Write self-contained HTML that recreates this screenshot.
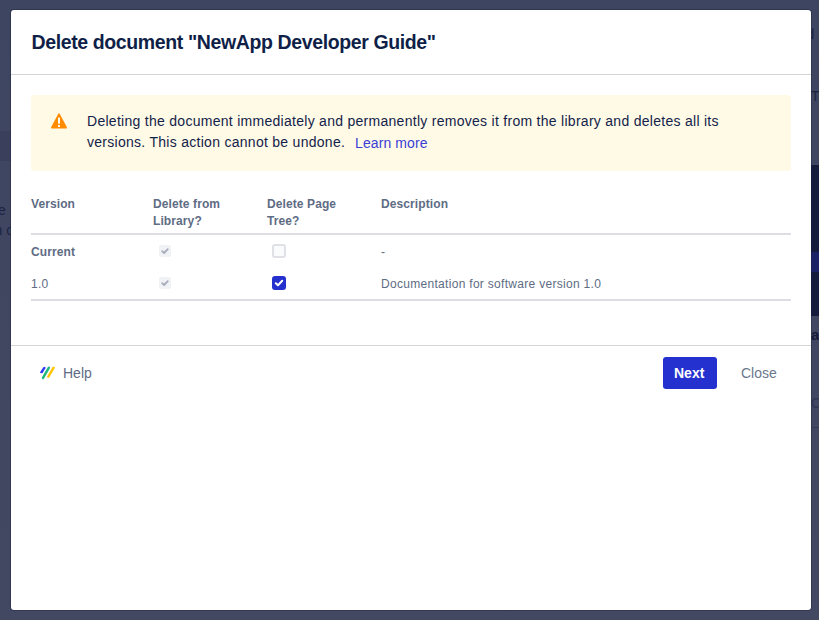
<!DOCTYPE html>
<html><head><meta charset="utf-8">
<style>
html,body{margin:0;padding:0;}
body{width:819px;height:620px;overflow:hidden;position:relative;background:linear-gradient(#3e4560,#434862);font-family:"Liberation Sans",sans-serif;}
.bg{position:absolute;}
.modal{position:absolute;left:11px;top:10px;width:800px;height:600px;background:#fff;border-radius:3px;box-shadow:0 0 0 1px rgba(20,28,60,0.35);}
.p{position:absolute;white-space:nowrap;}
.title{left:20.5px;top:22px;font-size:19.5px;line-height:20px;font-weight:bold;color:#0f1f47;letter-spacing:-0.38px;}
.hline{position:absolute;left:0;width:800px;height:1px;background:#d4d4d6;}
.warn{position:absolute;left:20px;top:85px;width:760px;height:76px;background:#fffae6;border-radius:3px;}
.wt{font-size:14px;line-height:20px;color:#13224a;letter-spacing:0.28px;}
.link{color:#3a40d6;}
.th{font-size:12px;font-weight:bold;color:#5e6c84;line-height:17px;letter-spacing:0.1px;}
.td{font-size:12px;color:#5e6c84;line-height:17px;letter-spacing:0.3px;}
.cb{position:absolute;box-sizing:border-box;}
.f14{font-size:14px;line-height:20px;}
</style></head><body>
<div class="bg" style="left:0;top:131px;width:11px;height:30px;background:#3a405c"></div>
<div class="bg" style="left:811px;top:165px;width:8px;height:151px;background:#151b3b"></div>
<div class="bg" style="left:811px;top:252px;width:8px;height:20px;background:#1b2366"></div>
<div class="bg" style="left:811px;top:427px;width:8px;height:1px;background:#363c56"></div>
<div class="bg" style="left:-2px;top:200px;width:13px;height:40px;overflow:hidden;font-size:14px;line-height:20px;color:#1c2342;white-space:nowrap">e<br><span style="margin-left:-3.5px">n c</span></div>
<div class="bg" style="left:811px;top:24px;width:8px;height:30px;overflow:hidden;font-size:14px;line-height:20px;color:#1c2342;white-space:nowrap"><span style="margin-left:-4.5px">d</span></div>
<div class="bg" style="left:811px;top:86px;width:8px;height:30px;overflow:hidden;font-size:14px;line-height:20px;color:#1c2342;white-space:nowrap">Ti</div>
<div class="bg" style="left:811px;top:325px;width:8px;height:22px;overflow:hidden;font-size:15px;line-height:20px;font-weight:bold;color:#131a38;white-space:nowrap">a</div>
<div class="bg" style="left:811px;top:393px;width:8px;height:22px;overflow:hidden;font-size:14px;line-height:20px;color:#2e3552;white-space:nowrap">C</div>
<div class="modal">
  <div class="p title">Delete document "NewApp Developer Guide"</div>
  <div class="hline" style="top:64px"></div>
  <div class="warn">
    <svg style="position:absolute;left:19px;top:17px" width="18" height="18" viewBox="0 0 18 18"><path d="M9 2.2 L16.2 15.7 L1.8 15.7 Z" fill="#ff8b00" stroke="#ff8b00" stroke-width="1.6" stroke-linejoin="round"/><rect x="8" y="5.4" width="2" height="6.3" rx="0.6" fill="#fff"/><rect x="8" y="13" width="2" height="2" rx="0.3" fill="#fff"/></svg>
  </div>
  <div class="p wt" style="left:76px;top:101px">Deleting the document immediately and permanently removes it from the library and deletes all its</div>
  <div class="p wt" style="left:76px;top:122px">versions. This action cannot be undone.</div>
  <div class="p wt link" style="left:344px;top:123px;letter-spacing:0.1px">Learn more</div>

  <div class="p th" style="left:20px;top:185.5px">Version</div>
  <div class="p th" style="left:142px;top:185.5px">Delete from<br>Library?</div>
  <div class="p th" style="left:256px;top:185.5px">Delete Page<br>Tree?</div>
  <div class="p th" style="left:370px;top:185.5px">Description</div>
  <div class="hline" style="left:20px;width:760px;top:223px;height:2px;background:#dddee3"></div>

  <div class="p th" style="left:20px;top:233.5px">Current</div>
  <div class="cb" style="left:148px;top:235px;width:12px;height:12px;background:#f1f2f5;border-radius:2px"><svg width="12" height="12" viewBox="0 0 12 12" style="position:absolute;left:0;top:0"><path d="M3.2 6.2 L5.1 8 L8.8 4.2" fill="none" stroke="#a5adba" stroke-width="1.8" stroke-linecap="round" stroke-linejoin="round"/></svg></div>
  <div class="cb" style="left:261px;top:234px;width:14px;height:14px;background:#fafbfc;border:2px solid #dfe1e6;border-radius:3px"></div>
  <div class="p td" style="left:370px;top:233.5px">-</div>

  <div class="p td" style="left:20px;top:265.5px">1.0</div>
  <div class="cb" style="left:148px;top:267px;width:12px;height:12px;background:#f1f2f5;border-radius:2px"><svg width="12" height="12" viewBox="0 0 12 12" style="position:absolute;left:0;top:0"><path d="M3.2 6.2 L5.1 8 L8.8 4.2" fill="none" stroke="#a5adba" stroke-width="1.8" stroke-linecap="round" stroke-linejoin="round"/></svg></div>
  <div class="cb" style="left:261px;top:266px;width:14px;height:14px;background:#2531cf;border-radius:3px"><svg width="14" height="14" viewBox="0 0 14 14" style="position:absolute;left:0;top:0"><path d="M3.8 7.2 L6 9.2 L10.2 4.8" fill="none" stroke="#fff" stroke-width="2" stroke-linecap="round" stroke-linejoin="round"/></svg></div>
  <div class="p td" style="left:370px;top:265.5px">Documentation for software version 1.0</div>
  <div class="hline" style="left:20px;width:760px;top:289px;height:2px;background:#dddee3"></div>

  <div class="hline" style="top:335px"></div>
  <svg style="position:absolute;left:28px;top:356px" width="16" height="14" viewBox="0 0 16 14">
    <path d="M5.4 1.9 L2.6 6.0" stroke="#2f3cf2" stroke-width="2.4" stroke-linecap="round"/>
    <path d="M0.9 6.9 L3.3 6.9 L4.4 5.1 L2.3 5.1 Z" fill="#2f3cf2"/>
    <line x1="9.9" y1="1.7" x2="4.0" y2="11.9" stroke="#1db87c" stroke-width="2.4" stroke-linecap="round"/>
    <line x1="14.6" y1="1.7" x2="9.4" y2="10.6" stroke="#ffc400" stroke-width="2.4" stroke-linecap="round"/>
  </svg>
  <div class="p f14" style="left:52px;top:353px;color:#5e6c84">Help</div>
  <div style="position:absolute;left:652px;top:347px;width:54px;height:32px;background:#2531cf;border-radius:3px"></div>
  <div class="p f14" style="left:663px;top:353px;color:#fff;font-weight:bold">Next</div>
  <div class="p f14" style="left:730px;top:353px;color:#6b778c">Close</div>
</div>
</body></html>
